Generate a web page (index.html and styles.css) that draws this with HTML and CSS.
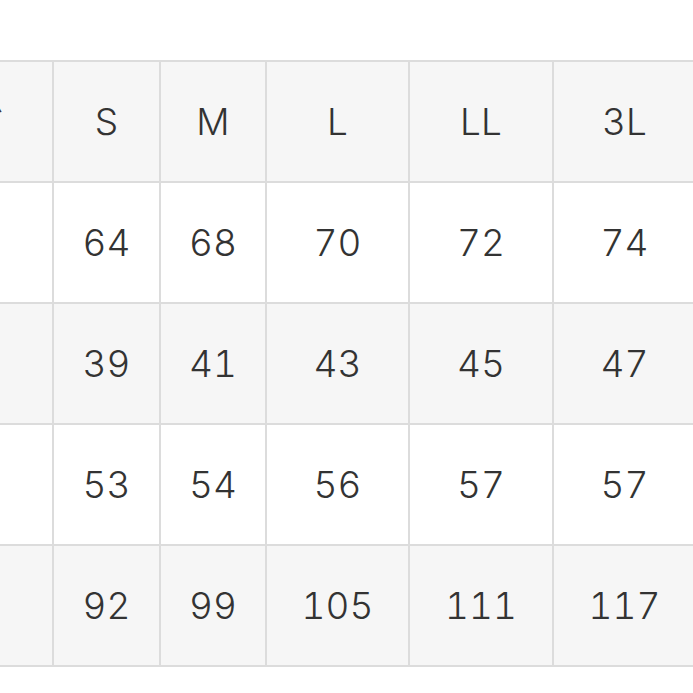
FILE: index.html
```html
<!DOCTYPE html>
<html lang="ja">
<head>
<meta charset="utf-8">
<title>サイズ表</title>
<link rel="stylesheet" href="styles.css">
</head>
<body>
<table class="size-table">
  <colgroup>
    <col class="c-label">
    <col class="c-s">
    <col class="c-m">
    <col class="c-l">
    <col class="c-ll">
    <col class="c-3l">
  </colgroup>
  <thead>
    <tr><th class="label">サイズ</th><th>S</th><th>M</th><th>L</th><th>LL</th><th>3L</th></tr>
  </thead>
  <tbody>
    <tr><th class="label"></th><td>64</td><td>68</td><td>70</td><td>72</td><td>74</td></tr>
    <tr><th class="label"></th><td>39</td><td>41</td><td>43</td><td>45</td><td>47</td></tr>
    <tr><th class="label"></th><td>53</td><td>54</td><td>56</td><td>57</td><td>57</td></tr>
    <tr><th class="label"></th><td>92</td><td>99</td><td>105</td><td>111</td><td>117</td></tr>
  </tbody>
</table>
</body>
</html>
```

FILE: styles.css
```css
html, body {
  margin: 0;
  padding: 0;
  background: #ffffff;
  overflow: hidden;
}

body {
  font-family: Inter, "Noto Sans CJK JP", sans-serif;
  color: #333333;
}

.size-table {
  border-collapse: collapse;
  table-layout: fixed;
  width: 843px;
  margin: 60px 0 0 -148px;
}

.c-label { width: 200px; }
.c-s { width: 107px; }
.c-m { width: 106px; }
.c-l { width: 143px; }
.c-ll { width: 144px; }
.c-3l { width: 143px; }

.size-table tr {
  height: 121px;
}

.size-table th,
.size-table td {
  border: 2px solid #dcdcdc;
  padding: 0;
  text-align: center;
  vertical-align: middle;
  font-weight: 300;
  font-size: 37px;
  letter-spacing: 0;
  font-feature-settings: "tnum" 1;
  color: #333333;
  background: #ffffff;
}

.size-table th.label {
  font-family: "Noto Sans CJK JP", sans-serif;
  font-size: 34px;
}

.size-table thead th,
.size-table tbody tr:nth-child(even) th,
.size-table tbody tr:nth-child(even) td {
  background: #f6f6f6;
}
```
